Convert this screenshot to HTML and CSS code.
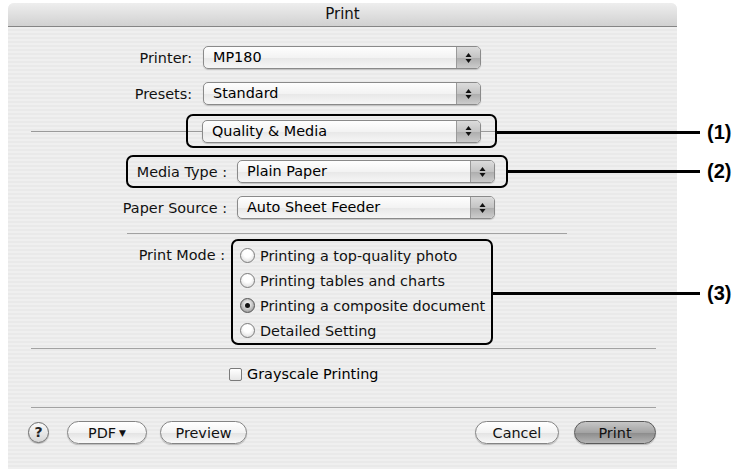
FILE: index.html
```html
<!DOCTYPE html>
<html>
<head>
<meta charset="utf-8">
<title>Print</title>
<link rel="stylesheet" href="styles.css">
</head>
<body>
<div class="page">
  <div class="window">
    <div class="titlebar">Print</div>
    <div class="content">
      <div class="row r-printer">
        <span class="lbl lbl-a">Printer:</span>
        <div class="popup w-a"><span class="val">MP180</span><span class="arrows"><svg width="7" height="12" viewBox="0 0 7 12"><path d="M3.5 1 L6.5 5 L0.5 5 Z M0.5 7 L6.5 7 L3.5 11 Z" fill="#111"/></svg></span></div>
      </div>
      <div class="row r-presets">
        <span class="lbl lbl-a">Presets:</span>
        <div class="popup w-a"><span class="val">Standard</span><span class="arrows"><svg width="7" height="12" viewBox="0 0 7 12"><path d="M3.5 1 L6.5 5 L0.5 5 Z M0.5 7 L6.5 7 L3.5 11 Z" fill="#111"/></svg></span></div>
      </div>
      <div class="row r-quality">
        <span class="groove g-left"></span>
        <div class="callbox cb-quality">
          <span class="groove tick"></span>
          <div class="popup w-q"><span class="val">Quality &amp; Media</span><span class="arrows"><svg width="7" height="12" viewBox="0 0 7 12"><path d="M3.5 1 L6.5 5 L0.5 5 Z M0.5 7 L6.5 7 L3.5 11 Z" fill="#111"/></svg></span></div>
          <span class="groove tick"></span>
        </div>
      </div>
      <div class="row r-media">
        <div class="callbox cb-media">
          <span class="lbl lbl-m">Media Type :</span>
          <div class="popup w-b"><span class="val">Plain Paper</span><span class="arrows"><svg width="7" height="12" viewBox="0 0 7 12"><path d="M3.5 1 L6.5 5 L0.5 5 Z M0.5 7 L6.5 7 L3.5 11 Z" fill="#111"/></svg></span></div>
        </div>
      </div>
      <div class="row r-source">
        <span class="lbl lbl-b">Paper Source :</span>
        <div class="popup w-b"><span class="val">Auto Sheet Feeder</span><span class="arrows"><svg width="7" height="12" viewBox="0 0 7 12"><path d="M3.5 1 L6.5 5 L0.5 5 Z M0.5 7 L6.5 7 L3.5 11 Z" fill="#111"/></svg></span></div>
      </div>
      <div class="sep sep-short"></div>
      <div class="row r-mode">
        <span class="lbl lbl-c">Print Mode :</span>
        <div class="callbox cb-mode">
          <div class="radio-row"><span class="radio"></span>Printing a top-quality photo</div>
          <div class="radio-row"><span class="radio"></span>Printing tables and charts</div>
          <div class="radio-row"><span class="radio on"></span>Printing a composite document</div>
          <div class="radio-row"><span class="radio"></span>Detailed Setting</div>
        </div>
      </div>
      <div class="sep sep-long s2"></div>
      <div class="row r-gray">
        <span class="check"></span>Grayscale Printing
      </div>
      <div class="sep sep-long s3"></div>
      <div class="row r-buttons">
        <span class="help">?</span>
        <span class="btn b-pdf">PDF <span class="tri">▼</span></span>
        <span class="btn b-preview">Preview</span>
        <span class="btn b-cancel">Cancel</span>
        <span class="btn b-print">Print</span>
      </div>
    </div>
  </div>
  <div class="callout c1"><span class="cline"></span><span class="ctext">(1)</span></div>
  <div class="callout c2"><span class="cline"></span><span class="ctext">(2)</span></div>
  <div class="callout c3"><span class="cline"></span><span class="ctext">(3)</span></div>
</div>
</body>
</html>
```

FILE: styles.css
```css
* { box-sizing: border-box; }

body {
  margin: 0;
  background: #ffffff;
  font-family: "DejaVu Sans", "Noto Sans", sans-serif;
  font-size: 14.4px;
  color: #000;
}

.page {
  position: relative;
  width: 742px;
  height: 473px;
  padding: 3px 0 0 8px;
}

.window {
  width: 669px;
  height: 466px;
  border-radius: 6px 6px 0 0;
  overflow: hidden;
  background: repeating-linear-gradient(to bottom, #efefef 0 2px, #e9e9e9 2px 4px);
  display: flex;
  flex-direction: column;
}

.titlebar {
  height: 24px;
  flex: none;
  background: linear-gradient(#eeeeee, #d1d1d1);
  border-bottom: 1px solid #858585;
  text-align: center;
  line-height: 23px;
  font-size: 15px;
  color: #111;
}

.content { display: flex; flex-direction: column; }

.row { display: flex; align-items: center; flex: none; }

.lbl { text-align: right; white-space: nowrap; color: #111; }
.lbl-a { width: 184px; margin-right: 11px; }
.lbl-b { width: 219px; margin-right: 10px; }
.lbl-m { width: 99px; margin-right: 10px; }
.lbl-c { width: 217px; margin-right: 6px; line-height: 25px; margin-top: 4px; }

.r-printer { margin-top: 19px; }
.r-presets { margin-top: 13px; }
.r-quality { margin-top: 9px; }
.r-media { margin-top: 7px; margin-left: 118px; }
.r-source { margin-top: 8px; }
.r-mode { margin-top: 5px; align-items: flex-start; }
.r-gray { margin-top: 17px; margin-left: 221px; height: 16px; }
.r-buttons { margin-top: 13px; padding-right: 21px; }

/* popup menus */
.popup {
  display: flex;
  align-items: stretch;
  height: 23px;
  border: 1px solid #8a8a8a;
  border-radius: 5px;
  background: linear-gradient(#fefefe, #f3f3f3 50%, #e8e8e8 52%, #f6f6f6);
  box-shadow: 0 1px 1px rgba(0, 0, 0, 0.18);
  overflow: hidden;
}
.popup .val {
  flex: 1;
  padding-left: 9px;
  line-height: 21px;
  white-space: nowrap;
}
.popup .arrows {
  width: 24px;
  border-left: 1px solid #9a9a9a;
  background: linear-gradient(#dcdcdc, #c4c4c4 50%, #adadad 52%, #cccccc);
  display: flex;
  align-items: center;
  justify-content: center;
}
.w-a { width: 278px; }
.w-q { width: 279px; }
.w-b { width: 258px; }

/* grooves / separators */
.groove { height: 1px; background: #9a9a9a; }
.g-left { width: 155px; margin-left: 23px; }
.tick { width: 14px; }

.sep { height: 1px; background: #a2a2a2; flex: none; }
.sep-short { margin-top: 14px; margin-left: 119px; width: 440px; }
.sep-long { margin-left: 23px; width: 625px; }
.s2 { margin-top: 3px; }
.s3 { margin-top: 25px; }

/* annotation boxes */
.callbox {
  border: 2px solid #000;
  border-radius: 7px;
  display: flex;
  align-items: center;
}
.cb-quality { width: 311px; height: 34px; }
.cb-media { width: 382px; height: 33px; padding-right: 11px; }
.cb-mode {
  width: 262px;
  height: 106px;
  flex-direction: column;
  align-items: stretch;
  padding: 2px 0 0 7px;
}

.radio-row {
  height: 25px;
  display: flex;
  align-items: center;
  white-space: nowrap;
  color: #111;
}
.radio {
  width: 15px;
  height: 15px;
  border-radius: 50%;
  border: 1px solid #7c7c7c;
  background: radial-gradient(circle at 50% 35%, #ffffff 0 35%, #e4e4e4 75%, #cfcfcf);
  margin-right: 5px;
  flex: none;
  display: flex;
  align-items: center;
  justify-content: center;
}
.radio.on {
  border-color: #555;
  background: radial-gradient(circle at 50% 40%, #e6e6e6 0 25%, #a9a9a9 70%, #8a8a8a);
}
.radio.on::after {
  content: "";
  width: 5px;
  height: 5px;
  border-radius: 50%;
  background: #111;
}

.check {
  width: 13px;
  height: 13px;
  border: 1px solid #7a7a7a;
  border-radius: 2px;
  background: linear-gradient(#ffffff, #e6e6e6);
  margin-right: 5px;
  flex: none;
}

/* push buttons */
.help {
  width: 21px;
  height: 21px;
  margin-left: 20px;
  border-radius: 50%;
  border: 1px solid #6e6e6e;
  background: linear-gradient(#fafafa, #d6d6d6);
  box-shadow: 0 1px 1px rgba(0, 0, 0, 0.25);
  font-size: 14px;
  font-weight: bold;
  line-height: 19px;
  text-align: center;
  flex: none;
  color: #222;
}
.btn {
  height: 23px;
  border: 1px solid #848484;
  border-radius: 12px;
  background: linear-gradient(#ffffff, #f3f3f3 50%, #e3e3e3 52%, #f9f9f9);
  box-shadow: 0 1px 1px rgba(0, 0, 0, 0.22);
  display: flex;
  align-items: center;
  justify-content: center;
  flex: none;
  color: #111;
}
.tri { font-size: 9px; margin-left: 3px; }
.b-pdf { width: 80px; margin-left: 18px; }
.b-preview { width: 87px; margin-left: 13px; }
.b-cancel { width: 84px; margin-left: auto; }
.b-print {
  width: 82px;
  margin-left: 15px;
  border-color: #5a5a5a;
  background: linear-gradient(#c6c6c6, #a4a4a4 50%, #8c8c8c 52%, #b4b4b4);
}

/* callouts (annotation overlay) */
.callout {
  position: absolute;
  display: flex;
  align-items: center;
  height: 24px;
}
.cline { height: 3px; background: #000; }
.ctext {
  font-family: "Liberation Sans", Arial, sans-serif;
  font-weight: bold;
  font-size: 20px;
  margin-left: 7px;
}
.c1 { left: 497px; top: 120px; }
.c1 .cline { width: 203px; }
.c2 { left: 508px; top: 159px; }
.c2 .cline { width: 192px; }
.c3 { left: 493px; top: 281px; }
.c3 .cline { width: 207px; }
```
